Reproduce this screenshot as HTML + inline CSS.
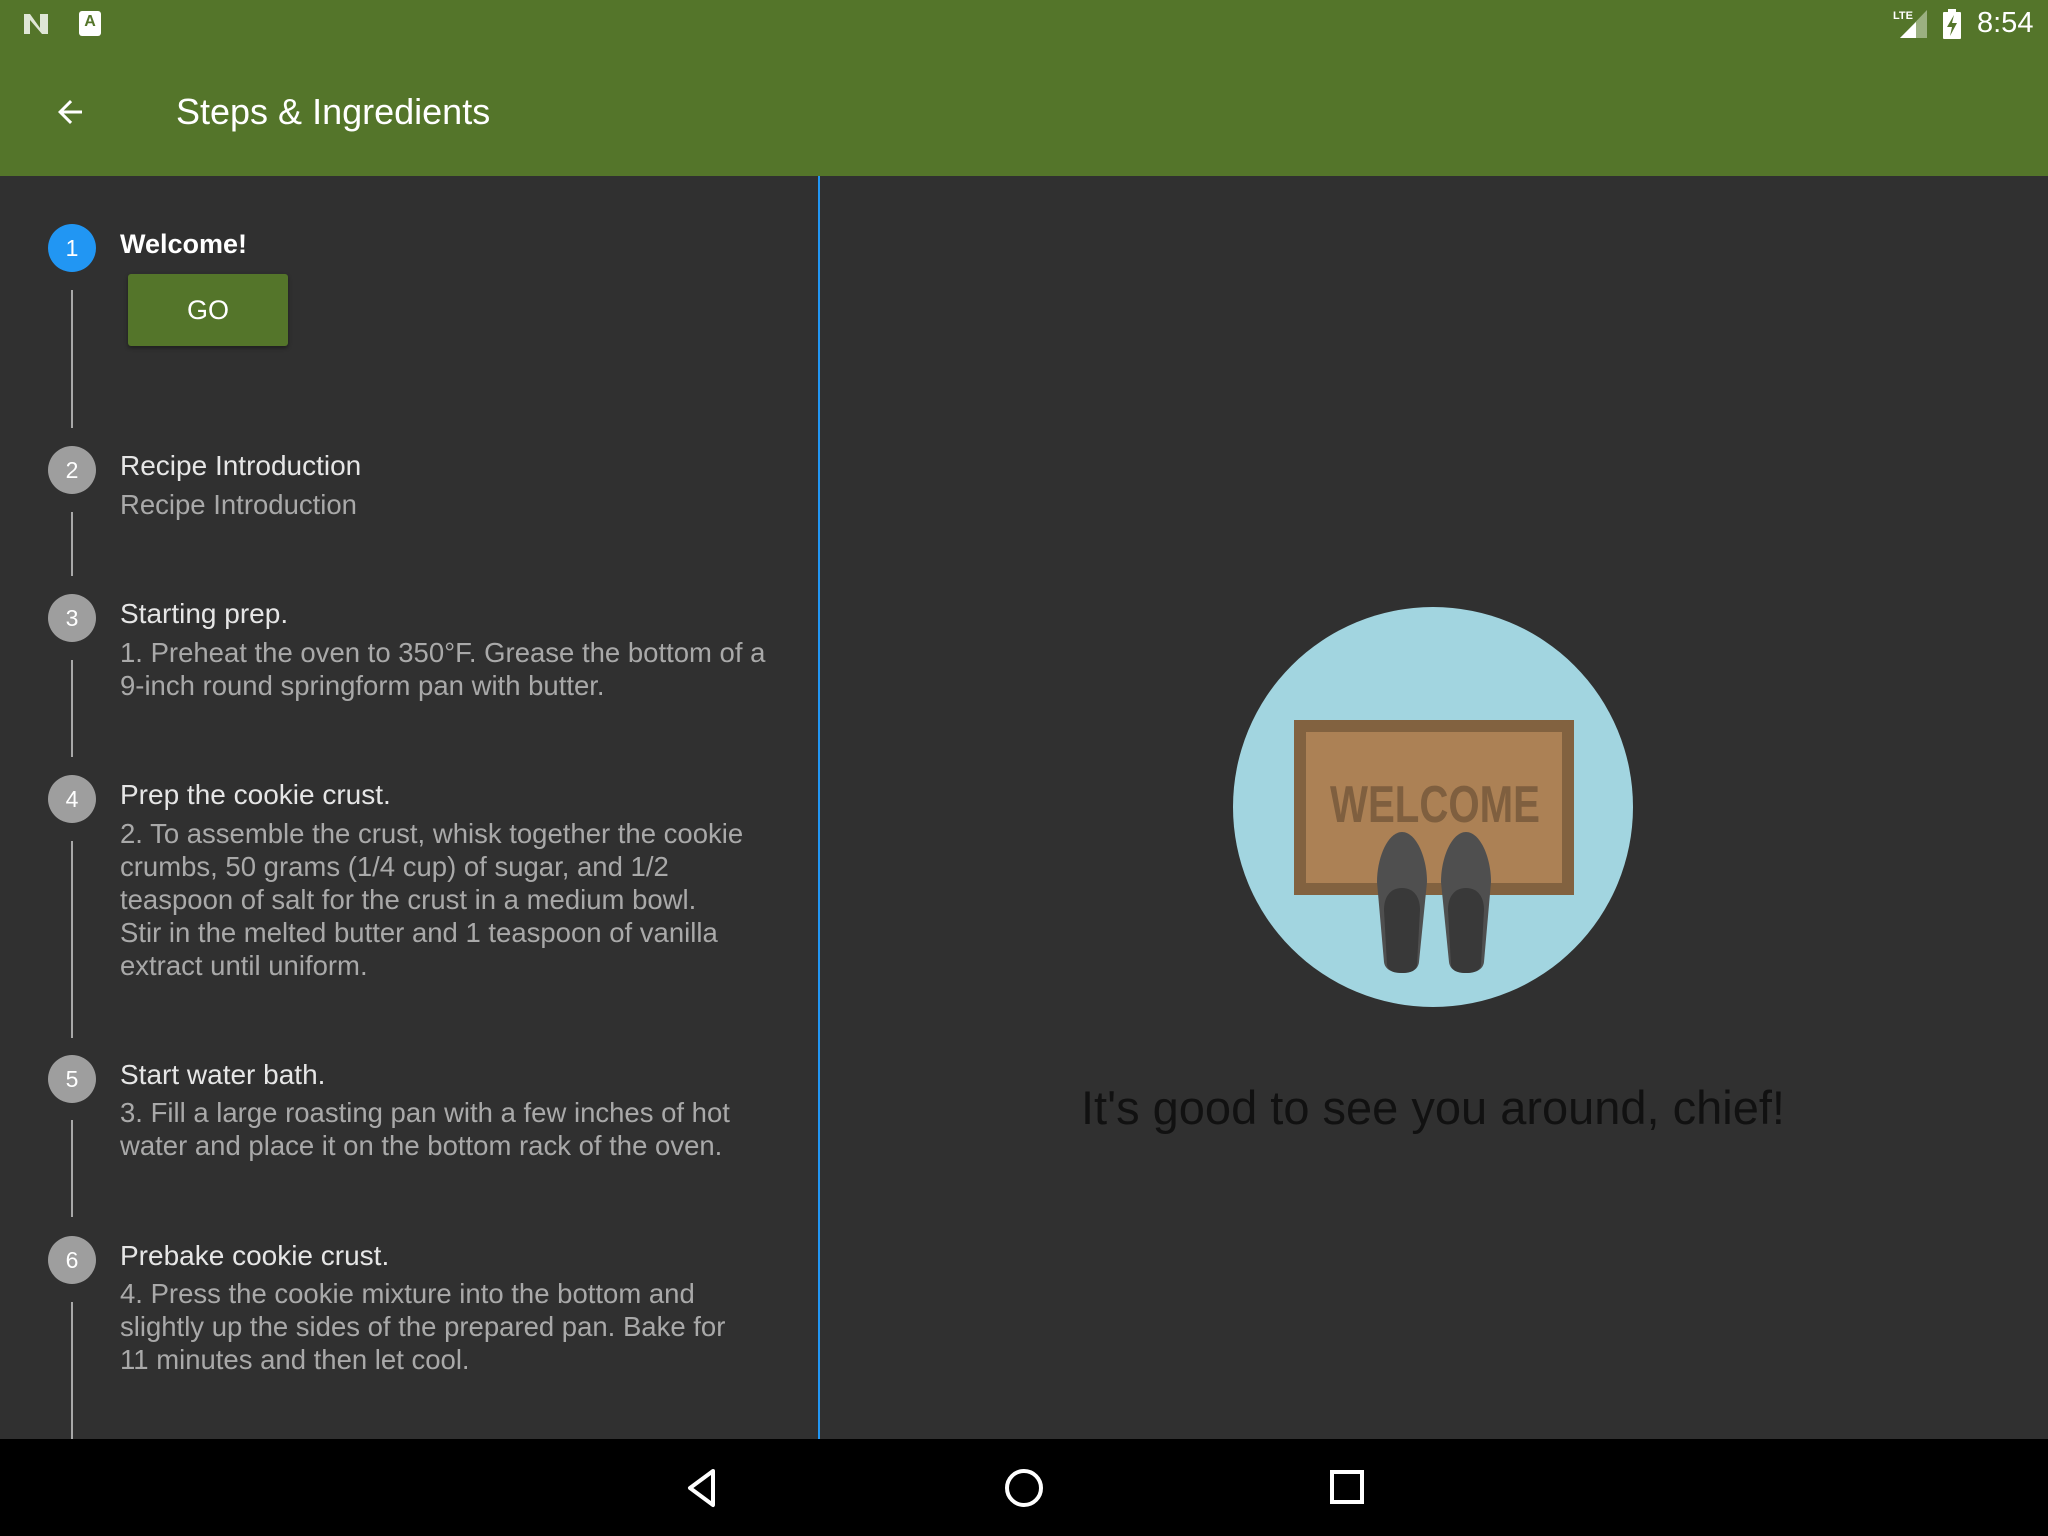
<!DOCTYPE html>
<html><head><meta charset="utf-8"><style>
*{margin:0;padding:0;box-sizing:border-box}
body{width:2048px;height:1536px;background:#303030;font-family:"Liberation Sans",sans-serif;position:relative;overflow:hidden}
.abs{position:absolute}
.top{left:0;top:0;width:2048px;height:176px;background:#54752a}
.circ{position:absolute;left:48px;width:48px;height:48px;border-radius:50%;background:#9e9e9e;color:#fff;font-size:23px;line-height:48px;text-align:center}
.vl{position:absolute;left:71px;width:2px;background:#a8a8a8}
.t{position:absolute;left:120px;font-size:28px;color:#e6e6e6;line-height:38px;white-space:nowrap}
.s{position:absolute;left:120px;font-size:27.5px;color:#a9a9a9;line-height:33px;white-space:nowrap}
</style></head><body>
<div class="abs top"></div>
<svg class="abs" style="left:22px;top:12px" width="30" height="24" viewBox="0 0 30 24"><path d="M2 2h6l10 14V2h8v20h-6L8 8v14H2z" fill="#dfe6d6"/></svg>
<div class="abs" style="left:79px;top:11px;width:22px;height:25px;background:#fff;border-radius:3px;color:#54752a;font-size:16px;font-weight:bold;text-align:center;line-height:22px">A</div>
<div class="abs" style="left:1893px;top:10px;color:#fff;font-size:11px;font-weight:bold">LTE</div>
<svg class="abs" style="left:1900px;top:10px" width="30" height="30" viewBox="0 0 30 30"><path d="M27 0V28H0Z" fill="#9bb081"/><path d="M16 12V28H0Z" fill="#fff"/></svg>
<svg class="abs" style="left:1943px;top:9px" width="18" height="30" viewBox="0 0 18 30"><rect x="5" y="0" width="8" height="3" fill="#fff"/><rect x="0" y="3" width="18" height="27" rx="1" fill="#fff"/><path d="M11 6 4 18h5l-2 9 7-13H9z" fill="#54752a"/></svg>
<div class="abs" style="left:1977px;top:7px;color:#fff;font-size:29px">8:54</div>
<svg class="abs" style="left:52px;top:94px" width="36" height="36" viewBox="0 0 24 24"><path d="M20 11H7.8l5.6-5.6L12 4l-8 8 8 8 1.4-1.4L7.8 13H20z" fill="#fff"/></svg>
<div class="abs" style="left:176px;top:91px;color:#fff;font-size:36px">Steps &amp; Ingredients</div>
<div class="abs" style="left:818px;top:176px;width:2px;height:1263px;background:#2196f3"></div>

<div class="circ" style="top:224px;background:#2196f3">1</div>
<div class="t" style="top:225px;color:#fff;font-weight:bold;font-size:27px">Welcome!</div>
<div class="abs" style="left:128px;top:274px;width:160px;height:72px;background:#54752a;border-radius:3px;box-shadow:0 2px 4px rgba(0,0,0,.4);color:#fff;font-size:27px;text-align:center;line-height:72px">GO</div>
<div class="vl" style="top:290px;height:138px"></div>

<div class="circ" style="top:446px">2</div>
<div class="t" style="top:447px">Recipe Introduction</div>
<div class="s" style="top:488px">Recipe Introduction</div>
<div class="vl" style="top:512px;height:64px"></div>

<div class="circ" style="top:594px">3</div>
<div class="t" style="top:595px">Starting prep.</div>
<div class="s" style="top:636px">1. Preheat the oven to 350°F. Grease the bottom of a<br>9-inch round springform pan with butter.</div>
<div class="vl" style="top:660px;height:97px"></div>

<div class="circ" style="top:775px">4</div>
<div class="t" style="top:776px">Prep the cookie crust.</div>
<div class="s" style="top:817px">2. To assemble the crust, whisk together the cookie<br>crumbs, 50 grams (1/4 cup) of sugar, and 1/2<br>teaspoon of salt for the crust in a medium bowl.<br>Stir in the melted butter and 1 teaspoon of vanilla<br>extract until uniform.</div>
<div class="vl" style="top:841px;height:197px"></div>

<div class="circ" style="top:1055px">5</div>
<div class="t" style="top:1056px">Start water bath.</div>
<div class="s" style="top:1096px">3. Fill a large roasting pan with a few inches of hot<br>water and place it on the bottom rack of the oven.</div>
<div class="vl" style="top:1120px;height:97px"></div>

<div class="circ" style="top:1236px">6</div>
<div class="t" style="top:1237px">Prebake cookie crust.</div>
<div class="s" style="top:1277px">4. Press the cookie mixture into the bottom and<br>slightly up the sides of the prepared pan. Bake for<br>11 minutes and then let cool.</div>
<div class="vl" style="top:1302px;height:137px"></div>

<svg class="abs" style="left:1233px;top:607px" width="400" height="400" viewBox="0 0 400 400">
<circle cx="200" cy="200" r="200" fill="#a2d5e0"/>
<rect x="61" y="113" width="280" height="175" fill="#826240"/>
<rect x="73" y="125" width="256" height="151" fill="#ac8155"/>
<text x="202" y="215" text-anchor="middle" font-family="Liberation Sans" font-weight="bold" font-size="52" fill="#7f5f3f" textLength="210" lengthAdjust="spacingAndGlyphs">WELCOME</text>
<path d="M169 225c-14 0-25 25-25 50l7 80c1 8 9 11 18 11s16-3 17-11l8-80c0-25-11-50-25-50z" fill="#4f4f4f"/>
<path d="M169 281c-11 0-18 8-18 22l3 55c1 6 7 8 15 8s14-2 15-8l3-55c0-14-7-22-18-22z" fill="#393939"/>
<path d="M233 225c-14 0-25 25-25 50l8 80c1 8 8 11 17 11s17-3 18-11l7-80c0-25-11-50-25-50z" fill="#4f4f4f"/>
<path d="M233 281c-11 0-18 8-18 22l3 55c1 6 7 8 15 8s14-2 15-8l3-55c0-14-7-22-18-22z" fill="#393939"/>
</svg>
<div class="abs" style="left:833px;width:1200px;top:1080px;text-align:center;font-size:47px;color:#111">It's good to see you around, chief!</div>
<div class="abs" style="left:0;top:1439px;width:2048px;height:97px;background:#000"></div>
<svg class="abs" style="left:680px;top:1466px" width="44" height="44" viewBox="0 0 44 44"><path d="M33 5 10 22l23 17z" fill="none" stroke="#fff" stroke-width="4" stroke-linejoin="round"/></svg>
<svg class="abs" style="left:1002px;top:1466px" width="44" height="44" viewBox="0 0 44 44"><circle cx="22" cy="22" r="17" fill="none" stroke="#fff" stroke-width="4"/></svg>
<svg class="abs" style="left:1326px;top:1466px" width="44" height="44" viewBox="0 0 44 44"><rect x="6" y="6" width="30" height="30" fill="none" stroke="#fff" stroke-width="4"/></svg>
</body></html>
